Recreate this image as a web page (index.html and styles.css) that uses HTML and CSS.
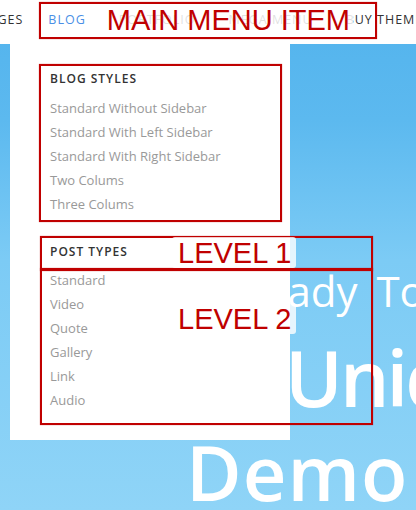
FILE: index.html
```html
<!DOCTYPE html>
<html>
<head>
<meta charset="utf-8">
<link rel="stylesheet" href="styles.css">
</head>
<body>
<header class="topbar">
  <nav class="nav">
    <a class="nav-item">PAGES</a>
    <a class="nav-item active">BLOG</a>
    <a class="nav-item">PORTFOLIO</a>
    <a class="nav-item">MEGA MENU</a>
    <a class="nav-item">BUY THEMES</a>
  </nav>
</header>
<main class="hero">
  <div class="hero-line l1">Ready To</div>
  <div class="hero-line l2">Unique</div>
  <div class="hero-line l3">Demo</div>
</main>

<div class="dropdown">
  <div class="group">
    <div class="group-title">BLOG STYLES</div>
    <ul class="items">
      <li>Standard Without Sidebar</li>
      <li>Standard With Left Sidebar</li>
      <li>Standard With Right Sidebar</li>
      <li>Two Colums</li>
      <li>Three Colums</li>
    </ul>
  </div>
  <div class="group second">
    <div class="group-title">POST TYPES</div>
    <ul class="items">
      <li>Standard</li>
      <li>Video</li>
      <li>Quote</li>
      <li>Gallery</li>
      <li>Link</li>
      <li>Audio</li>
    </ul>
  </div>
</div>

<div class="note-box box-main"><span class="note-text">MAIN MENU ITEM</span></div>
<div class="note-box box-styles"></div>
<div class="note-box box-l1"></div>
<div class="note-box box-l2"></div>
<div class="note-label lab-l1">LEVEL 1</div>
<div class="note-label lab-l2">LEVEL 2</div>
</body>
</html>
```

FILE: styles.css
```css
html, body {
  margin: 0;
  padding: 0;
}
body {
  width: 416px;
  height: 510px;
  overflow: hidden;
  position: relative;
  font-family: "Open Sans", "Liberation Sans", sans-serif;
  background: linear-gradient(180deg, #52b3ed 0px, #5cb9ef 120px, #7ccbf5 260px, #8fd4f7 510px);
}
.topbar {
  height: 44px;
  background: #fff;
  overflow: hidden;
}
.nav {
  display: flex;
  gap: 25px;
  margin-left: -20px;
  white-space: nowrap;
  height: 38px;
  align-items: center;
}
.nav-item {
  font-size: 12.5px;
  letter-spacing: 1px;
  color: #333;
}
.nav-item.active {
  color: #4a8fe6;
}
.nav-item.active ~ .nav-item {
  margin-left: 8px;
}
.hero {
  padding-top: 222px;
  color: #fff;
  white-space: nowrap;
}
.hero-line {
  font-weight: 600;
}
.l1 {
  font-size: 42px;
  line-height: 50px;
  margin-left: 238px;
  word-spacing: 8px;
  font-weight: 400;
}
.l2 {
  font-size: 78px;
  line-height: 100px;
  margin-top: 11px;
  margin-left: 285px;
  letter-spacing: -3px;
}
.l3 {
  font-size: 76px;
  line-height: 90px;
  margin-top: 0;
  margin-left: 186px;
  letter-spacing: 1px;
}
.dropdown {
  position: absolute;
  left: 10px;
  top: 44px;
  width: 240px;
  height: 345px;
  padding: 23px 0 28px 40px;
  background: #fff;
}
.group-title {
  font-size: 12px;
  font-weight: 600;
  letter-spacing: 1px;
  color: #333;
  line-height: 24px;
  margin-bottom: 5px;
}
.group.second {
  margin-top: 24px;
}
.group.second .group-title {
  margin-bottom: 4px;
}
.items {
  list-style: none;
  margin: 0;
  padding: 0;
}
.items li {
  font-size: 13px;
  line-height: 24px;
  color: #999;
}
.note-box {
  position: absolute;
  border: 2px solid #c00000;
  box-shadow: 0 0 1px rgba(192, 0, 0, 0.6);
  box-sizing: border-box;
}
.box-main {
  left: 39px;
  top: 2px;
  width: 338px;
  height: 37px;
  display: flex;
  align-items: center;
  justify-content: flex-end;
  padding-right: 22px;
}
.note-text {
  font-family: "Liberation Sans", Arial, sans-serif;
  font-size: 29px;
  line-height: 31px;
  color: #c00000;
  background: rgba(255, 255, 255, 0.85);
  border-radius: 3px;
  padding: 0 3px 0 4px;
}
.box-styles {
  left: 39px;
  top: 64px;
  width: 243px;
  height: 158px;
}
.box-l1 {
  left: 40px;
  top: 236px;
  width: 333px;
  height: 35px;
}
.box-l2 {
  left: 40px;
  top: 268px;
  width: 333px;
  height: 157px;
}
.note-label {
  position: absolute;
  font-family: "Liberation Sans", Arial, sans-serif;
  font-size: 29px;
  line-height: 30px;
  color: #c00000;
  background: rgba(255, 255, 255, 0.8);
  border-radius: 3px;
  padding: 1px 5px 0 6px;
}
.lab-l1 {
  left: 172px;
  top: 237px;
}
.lab-l2 {
  left: 172px;
  top: 303px;
}
```
